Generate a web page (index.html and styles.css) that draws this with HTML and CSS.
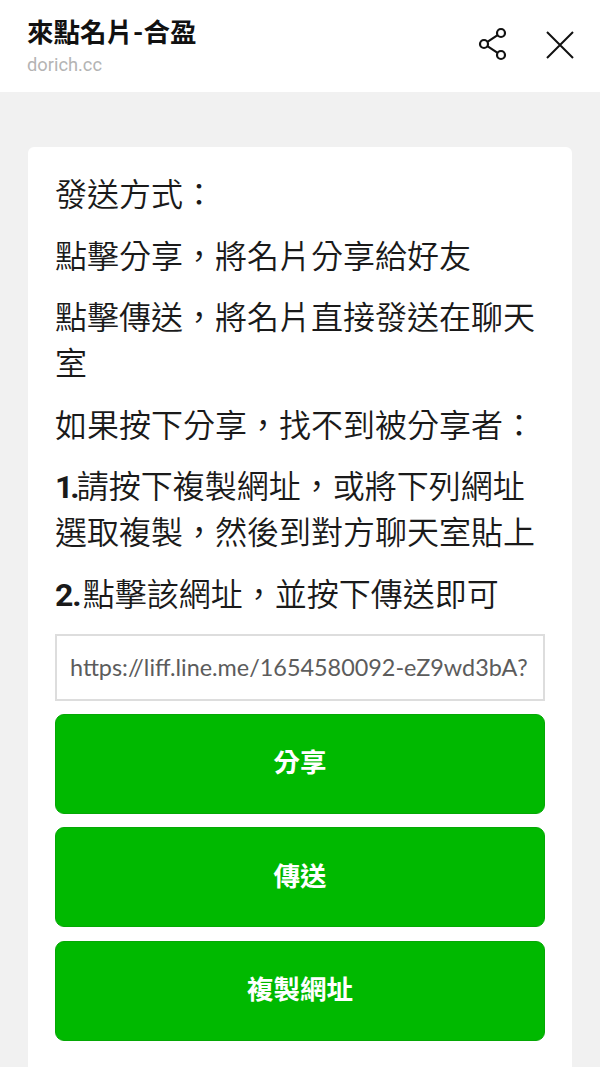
FILE: index.html
```html
<!DOCTYPE html>
<html lang="zh-Hant">
<head>
    <meta charset="UTF-8">
    <meta name="viewport" content="width=device-width, initial-scale=1.0">
    <title>來點名片-合盈</title>
    <link rel="stylesheet" href="styles.css">
</head>
<body>
    <header class="topbar">
        <div class="topbar-title">
            <h1>來點名片-合盈</h1>
            <p>dorich.cc</p>
        </div>
        <svg class="icon-share" width="30" height="34" viewBox="0 0 30 34" fill="none" stroke="#111" stroke-width="2.2">
            <circle cx="6" cy="17" r="4"/>
            <circle cx="23" cy="6" r="4"/>
            <circle cx="23" cy="28" r="4"/>
            <path d="M9.4 14.8 19.6 8.2M9.4 19.2 19.6 25.8"/>
        </svg>
        <svg class="icon-close" width="28" height="28" viewBox="0 0 28 28" fill="none" stroke="#111" stroke-width="2">
            <path d="M1 1 27 27M27 1 1 27"/>
        </svg>
    </header>

    <main class="content">
        <section class="card">
            <p>發送方式：</p>
            <p>點擊分享，將名片分享給好友</p>
            <p>點擊傳送，將名片直接發送在聊天室</p>
            <p>如果按下分享，找不到被分享者：</p>
            <p><strong class="step-one">1.</strong>請按下複製網址，或將下列網址選取複製，然後到對方聊天室貼上</p>
            <p><strong class="step-two">2.</strong>點擊該網址，並按下傳送即可</p>
            <input class="url-input" type="text" value="https://liff.line.me/1654580092-eZ9wd3bA?">
            <div class="actions">
                <button>分享</button>
                <button>傳送</button>
                <button>複製網址</button>
            </div>
        </section>
    </main>
</body>
</html>
```
FILE: styles.css
```css
* {
    box-sizing: border-box;
    margin: 0;
    padding: 0;
}

html, body {
    height: 1067px;
    overflow: hidden;
}

body {
    background-color: #f1f1f1;
    color: #111;
    font-family: "Roboto", "Noto Sans CJK TC", sans-serif;
}

.topbar {
    display: flex;
    align-items: center;
    height: 92px;
    padding: 0 26px 0 27px;
    background-color: #fff;
}

.topbar-title {
    flex: 1;
}

.topbar-title h1 {
    font-size: 26.5px;
    line-height: 34px;
    font-weight: 700;
    color: #111;
}

.topbar-title p {
    margin-top: 3px;
    font-size: 18.3px;
    line-height: 24px;
    color: #b4b4b4;
}

.icon-share {
    margin-right: 38px;
    margin-top: -4px;
}

.icon-close {
    margin-top: -3px;
}

.content {
    padding: 55px 28px 0;
}

.card {
    height: 940px;
    padding: 25px 27px 0;
    background-color: #fff;
    border-radius: 6px 6px 0 0;
}

.card p {
    margin-bottom: 15.6px;
    font-size: 32px;
    line-height: 46px;
    font-weight: 350;
    color: #1a1a1a;
}

.card strong {
    font-weight: 700;
}

.step-one {
    letter-spacing: -3px;
}

.step-two {
    margin-right: 2px;
    letter-spacing: -1px;
}

.url-input {
    display: block;
    width: 100%;
    height: 67px;
    padding: 0 13px;
    border: 2px solid #ddd;
    background-color: #fff;
    color: #5c5c5c;
    font-family: "Lato", sans-serif;
    font-size: 23.4px;
}

.actions {
    display: flex;
    flex-direction: column;
    gap: 13.5px;
    margin-top: 13px;
}

.actions button {
    height: 100px;
    padding-bottom: 6px;
    border: 1px solid #05a805;
    border-radius: 9px;
    background-color: #00b900;
    color: #fff;
    font-family: "Roboto", "Noto Sans CJK TC", sans-serif;
    font-size: 26.5px;
    font-weight: 700;
}
```
